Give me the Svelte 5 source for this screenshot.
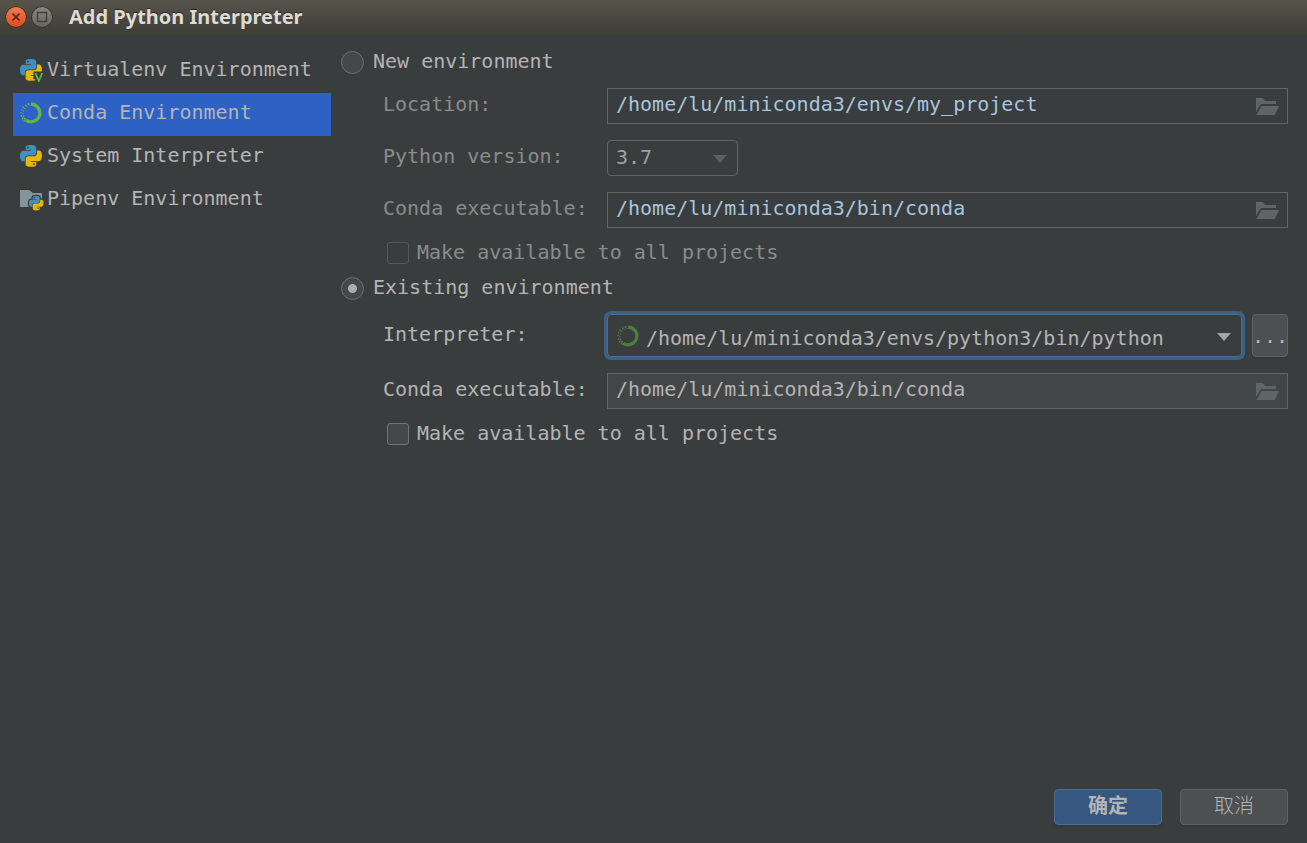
<script>
  const pages = [
    { id: 'virtualenv', label: 'Virtualenv Environment' },
    { id: 'conda', label: 'Conda Environment' },
    { id: 'system', label: 'System Interpreter' },
    { id: 'pipenv', label: 'Pipenv Environment' }
  ]

  let activePage = $state('conda')
  let mode = $state('existing')
  let location = $state('/home/lu/miniconda3/envs/my_project')
  let newConda = $state('/home/lu/miniconda3/bin/conda')
  let existingConda = $state('/home/lu/miniconda3/bin/conda')
  let shareNew = $state(false)
  let shareExisting = $state(false)

  const snake =
    'M14.25.18l.9.2.73.26.59.3.45.32.34.34.25.34.16.33.1.3.04.26.02.2-.01.13V8.5l-.05.63-.13.55-.21.46-.26.38-.3.31-.33.25-.35.19-.35.14-.33.1-.3.07-.26.04-.21.02H8.77l-.69.05-.59.14-.5.22-.41.27-.33.32-.27.35-.2.36-.15.37-.1.35-.07.32-.04.27-.02.21v3.06H3.17l-.21-.03-.28-.07-.32-.12-.35-.18-.36-.26-.36-.36-.35-.46-.32-.59-.28-.73-.21-.88-.14-1.05-.05-1.23.06-1.22.16-1.04.24-.87.32-.71.36-.57.4-.44.42-.33.42-.24.4-.16.36-.1.32-.05.24-.01h.16l.06.01h8.16v-.83H6.18l-.01-2.75-.02-.37.05-.34.11-.31.17-.28.25-.26.31-.23.38-.2.44-.18.51-.15.58-.12.64-.1.71-.06.77-.04.84-.02 1.27.05zm-6.3 1.98l-.23.33-.08.41.08.41.23.34.33.22.41.09.41-.09.33-.22.23-.34.08-.41-.08-.41-.23-.33-.33-.22-.41-.09-.41.09z'
</script>

{#snippet python()}
  <path fill="#3e91bd" d={snake} />
  <path fill="#eab700" d={snake} transform="rotate(180 12 12)" />
{/snippet}

{#snippet ring()}
  <path fill="none" stroke="currentColor" stroke-width="3.200" d="M11 2.200A8.800 8.800 0 1 1 6 18.200" />
  <g fill="currentColor">
    <circle cx="8.500" cy="2" r="1" />
    <circle cx="9.800" cy="3.200" r=".7" />
    <circle cx="5.700" cy="3.300" r=".9" />
    <circle cx="7" cy="4.600" r=".6" />
    <circle cx="3.200" cy="5.200" r=".9" />
    <circle cx="4.800" cy="6.400" r=".7" />
    <circle cx="1.700" cy="7.800" r=".8" />
    <circle cx="3.500" cy="9" r=".7" />
    <circle cx="1" cy="10.800" r=".8" />
    <circle cx="3" cy="11.800" r=".7" />
    <circle cx="1.400" cy="13.800" r=".9" />
    <circle cx="3.600" cy="14.400" r=".8" />
    <circle cx="2.700" cy="16.600" r="1" />
    <circle cx="5" cy="16.800" r="1" />
    <circle cx="4.400" cy="18.600" r=".9" />
  </g>
{/snippet}

{#snippet browse()}
  <button class="browse" type="button" aria-label="Browse">
    <svg width="24" height="18" viewBox="0 0 24 18" fill="#5d6569">
      <path d="M1 0h7l2 3h11v3H6L1 14Z" />
      <path d="M6.500 8H24l-4 9H1.500Z" />
    </svg>
  </button>
{/snippet}

<div class="window">
  <header>
    <button class="control close" type="button" aria-label="Close">
      <svg width="22" height="22" viewBox="0 0 22 22">
        <path d="M7.500 7.500l7 7M14.500 7.500l-7 7" stroke="#4a2416" stroke-width="1.600" />
      </svg>
    </button>
    <button class="control" type="button" aria-label="Maximize">
      <svg width="22" height="22" viewBox="0 0 22 22">
        <rect x="6.500" y="6.500" width="9" height="9" fill="none" stroke="#42413c" stroke-width="1.500" />
      </svg>
    </button>
    <h1>Add Python Interpreter</h1>
  </header>

  <div class="body">
    <nav>
      {#each pages as page}
        <button
          class="page"
          class:active={activePage === page.id}
          type="button"
          onclick={() => (activePage = page.id)}
        >
          <svg width="24" height="24" viewBox="0 0 24 24">
            {#if page.id === 'conda'}
              <g color="#62b543" transform="translate(0 1)">{@render ring()}</g>
            {:else if page.id === 'pipenv'}
              <path fill="#87939a" d="M0 3h9l4 3h9v14H0Z" />
              <g transform="translate(9 9) scale(.6)">
                <path d={snake} fill="#3a3d3e" stroke="#3a3d3e" stroke-width="4" />
                <path d={snake} fill="#3a3d3e" stroke="#3a3d3e" stroke-width="4" transform="rotate(180 12 12)" />
                {@render python()}
              </g>
            {:else}
              <g transform="translate(0 1) scale(.91)">{@render python()}</g>
              {#if page.id === 'virtualenv'}
                <path d="M13.500 13.500H24V24h-7.500l-3-5Z" fill="#3a3d3e" />
                <path d="M15.400 15l3.400 8 3.400-8" fill="none" stroke="#62b543" stroke-width="1.800" />
              {/if}
            {/if}
          </svg>
          <span>{page.label}</span>
        </button>
      {/each}
    </nav>

    <main>
      <label class="mode">
        <input type="radio" name="mode" value="new" bind:group={mode} />
        <span>New environment</span>
      </label>
      <div class="fields" class:off={mode !== 'new'}>
        <label for="location">Location:</label>
        <div class="path">
          <input id="location" type="text" bind:value={location} />
          {@render browse()}
        </div>

        <label for="version">Python version:</label>
        <div class="combo version">
          <select id="version" disabled={mode !== 'new'}>
            <option>3.7</option>
          </select>
          <svg class="arrow" width="14" height="8" viewBox="0 0 14 8"><path d="M0 0h14L7 8Z" /></svg>
        </div>

        <label for="new-conda">Conda executable:</label>
        <div class="path">
          <input id="new-conda" type="text" bind:value={newConda} />
          {@render browse()}
        </div>
      </div>
      <label class="share" class:off={mode !== 'new'}>
        <input type="checkbox" bind:checked={shareNew} disabled={mode !== 'new'} />
        <span>Make available to all projects</span>
      </label>

      <label class="mode second">
        <input type="radio" name="mode" value="existing" bind:group={mode} />
        <span>Existing environment</span>
      </label>
      <div class="fields">
        <label for="interpreter">Interpreter:</label>
        <div class="picker">
          <div class="combo interpreter">
            <svg class="env" width="22" height="22" viewBox="0 0 22 22">{@render ring()}</svg>
            <select id="interpreter">
              <option>/home/lu/miniconda3/envs/python3/bin/python</option>
            </select>
            <svg class="arrow" width="14" height="8" viewBox="0 0 14 8"><path d="M0 0h14L7 8Z" /></svg>
          </div>
          <button class="more" type="button">...</button>
        </div>

        <label for="existing-conda">Conda executable:</label>
        <div class="path readonly">
          <input id="existing-conda" type="text" readonly bind:value={existingConda} />
          {@render browse()}
        </div>
      </div>
      <label class="share">
        <input type="checkbox" bind:checked={shareExisting} />
        <span>Make available to all projects</span>
      </label>
    </main>
  </div>

  <footer>
    <button class="action primary" type="button">确定</button>
    <button class="action" type="button">取消</button>
  </footer>
</div>

<style>
  :global(body) {
    background: #3a3d3e;
  }

  .window {
    display: flex;
    flex-direction: column;
    min-height: 100vh;
    color: #b4b4b4;
    font: 20px/24px 'DejaVu Sans Mono', 'Noto Sans CJK SC', monospace;
  }

  .window * {
    box-sizing: border-box;
  }

  button,
  input,
  select {
    margin: 0;
    padding: 0;
    border: 0;
    background: none;
    color: inherit;
    font: inherit;
    appearance: none;
    outline: none;
  }

  svg {
    display: block;
    flex: none;
  }

  header {
    display: flex;
    align-items: center;
    gap: 4px;
    height: 34px;
    padding-left: 5px;
    background: linear-gradient(#57544b, #3e3d39);
  }

  .control {
    width: 22px;
    height: 22px;
    border-radius: 50%;
    background: linear-gradient(#8b8980, #66645d);
    box-shadow: inset 0 0 0 1px #35342f;
  }

  .control.close {
    background: linear-gradient(#f27c55, #dc4a1b);
  }

  h1 {
    margin: 0 0 0 12px;
    color: #dfdbd2;
    font: bold 20px/24px 'Noto Sans', sans-serif;
    text-shadow: 0 -1px #2b2a27;
  }

  .body {
    display: flex;
    flex: 1;
    gap: 10px;
    padding: 16px 19px 16px 13px;
  }

  nav {
    display: flex;
    flex: none;
    flex-direction: column;
    width: 318px;
  }

  .page {
    display: flex;
    align-items: center;
    gap: 3px;
    height: 43px;
    padding: 0 0 4px 7px;
    text-align: left;
  }

  .page span {
    padding-bottom: 2px;
  }

  .page.active {
    background: #2d62c4;
  }

  main {
    flex: 1;
    min-width: 0;
  }

  .mode {
    display: flex;
    align-items: center;
    gap: 9px;
    height: 24px;
    margin-bottom: 14px;
  }

  .mode.second {
    margin-top: 12px;
  }

  .mode span,
  .share span {
    padding-bottom: 2px;
  }

  .mode input {
    width: 23px;
    height: 23px;
    border: 1px solid #6b6e6e;
    border-radius: 50%;
    background: #43494a;
  }

  .mode input:checked {
    background: radial-gradient(circle, #adadad 4px, #43494a 5px);
  }

  .fields {
    display: grid;
    grid-template-columns: 224px minmax(0, 1fr);
    row-gap: 16px;
    align-items: center;
    margin-left: 42px;
  }

  .fields > label {
    padding-bottom: 4px;
  }

  .off,
  .fields.off > label {
    color: #8a8b8b;
  }

  .path {
    display: flex;
    align-items: center;
    height: 36px;
    padding: 0 8px;
    border: 1px solid #646464;
  }

  .path input {
    flex: 1;
    min-width: 0;
    height: 34px;
    padding-bottom: 4px;
  }

  .off .path input {
    color: #a9c4dc;
  }

  .path.readonly {
    background: #434647;
  }

  .browse {
    margin-top: 2px;
  }

  .combo {
    display: flex;
    align-items: center;
    position: relative;
    border: 1px solid #646464;
    border-radius: 4px;
  }

  .combo select {
    flex: 1;
    min-width: 0;
    height: 34px;
  }

  .combo .arrow {
    position: absolute;
    right: 10px;
    margin-top: 2px;
    fill: #a2a5a8;
    pointer-events: none;
  }

  .combo.version {
    width: 131px;
    height: 36px;
    padding-left: 8px;
    color: #a0a0a0;
  }

  .version select {
    padding-bottom: 3px;
    opacity: 1;
  }

  .combo.version .arrow {
    fill: #5c5e5f;
  }

  .picker {
    display: flex;
    gap: 10px;
  }

  .combo.interpreter {
    flex: 1;
    gap: 7px;
    height: 43px;
    padding-left: 9px;
    border-color: #466d94;
    box-shadow: 0 0 0 3px #3d6185;
  }

  .interpreter select {
    height: 41px;
    padding-top: 4px;
  }

  .env {
    color: #4d7f3d;
  }

  .more {
    width: 36px;
    height: 43px;
    border: 1px solid #5f6263;
    border-radius: 4px;
    background: #4c5052;
    text-align: center;
    text-indent: -1px;
    box-shadow: 0 2px 1px #353738;
  }

  .share {
    display: flex;
    align-items: center;
    gap: 8px;
    height: 22px;
    margin: 14px 0 0 46px;
  }

  .share input {
    width: 22px;
    height: 22px;
    border: 1px solid #707272;
    border-radius: 3px;
    background: #43494a;
  }

  .share.off input {
    border-color: #555757;
    background: none;
  }

  .share input:checked {
    background: #adadad;
  }

  footer {
    display: flex;
    justify-content: flex-end;
    gap: 18px;
    padding: 0 19px 18px;
  }

  .action {
    width: 108px;
    height: 36px;
    padding-bottom: 4px;
    border: 1px solid #5f6263;
    border-radius: 4px;
    background: #4c5052;
    font-family: 'Noto Sans CJK SC', sans-serif;
    font-weight: 300;
    box-shadow: 0 2px 1px #353738;
  }

  .action.primary {
    border-color: #4c708c;
    background: #365880;
    font-weight: bold;
  }
</style>
